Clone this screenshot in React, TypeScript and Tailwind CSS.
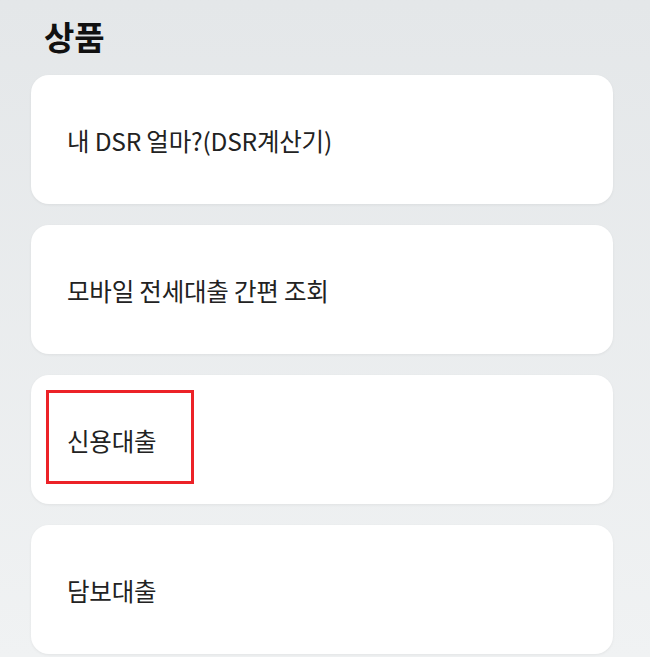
const items = ['내 DSR 얼마?(DSR계산기)', '모바일 전세대출 간편 조회', '신용대출', '담보대출']

function ProductCard({ label, marked }: { label: string; marked?: boolean }) {
  return (
    <div className="relative flex h-[129px] items-center rounded-[18px] bg-white pl-[36px] pt-[3px] shadow-[0_1px_3px_rgba(0,0,0,0.06)]">
      <span className="text-[24.5px] font-normal leading-none tracking-[-0.2px] text-[#222]">{label}</span>
      {marked ? (
        <div className="absolute left-[15px] top-[15px] h-[94px] w-[148px] border-[3px] border-[#ec2228]" />
      ) : null}
    </div>
  )
}

export default function App() {
  return (
    <div
      className="h-[657px] w-[650px] overflow-hidden bg-gradient-to-b from-[#e4e7e9] to-[#f0f2f3] px-[31px] pt-[14px]"
      style={{ fontFamily: '"Noto Sans CJK KR", "Noto Sans", sans-serif' }}
    >
      <h1 className="pl-[13px] text-[33px] font-bold leading-[44px] text-[#111]">상품</h1>
      <div className="mt-[17px] flex w-[582px] flex-col gap-[21px]">
        {items.map((label) => (
          <ProductCard key={label} label={label} marked={label === '신용대출'} />
        ))}
      </div>
    </div>
  )
}
